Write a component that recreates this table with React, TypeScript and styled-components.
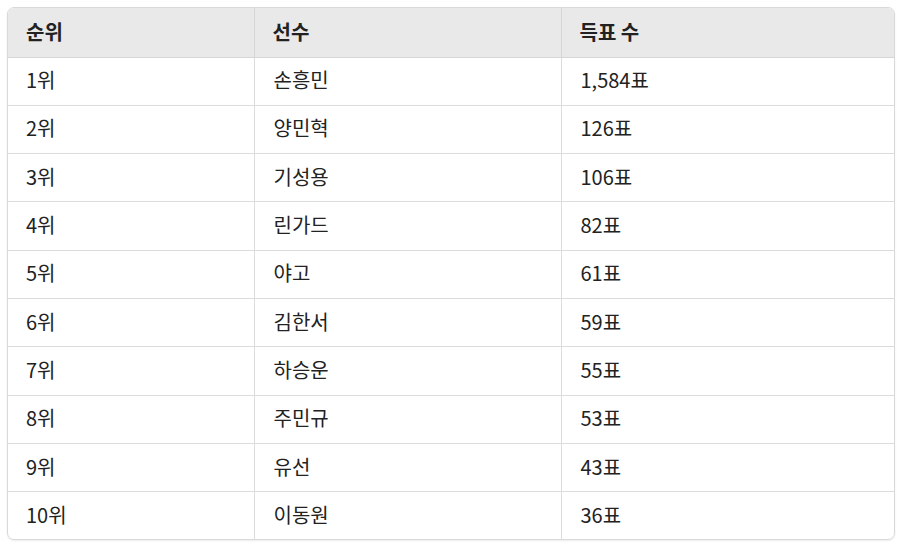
import styled, { createGlobalStyle } from "styled-components";

const GlobalStyle = createGlobalStyle`
  body {
    margin: 0;
    background: #ffffff;
    font-family: "Noto Sans CJK KR", "Noto Sans", "Liberation Sans", sans-serif;
  }
`;

const Page = styled.div`
  padding: 7px 5px 5px 7px;
`;

const TableFrame = styled.div`
  border: 1px solid #d9d9d9;
  border-radius: 7px;
  overflow: hidden;
  box-shadow: 0 1px 2px rgba(0, 0, 0, 0.08);
`;

const Table = styled.table`
  width: 100%;
  border-collapse: collapse;
  table-layout: fixed;
  font-size: 20px;
  line-height: 1.2;
  color: #222;
`;

const HeadCell = styled.th<{ $width?: number }>`
  box-sizing: border-box;
  width: ${(p) => (p.$width ? `${p.$width}px` : "auto")};
  height: 49px;
  padding: 0 0 1px 18px;
  text-align: left;
  font-weight: 700;
  background: #e9e9e9;
  border-left: 1px solid #d6d6d6;
  border-bottom: 1px solid #d6d6d6;
  &:first-child {
    border-left: none;
  }
`;

const Cell = styled.td`
  height: 45.3px;
  padding: 0 0 2px 19px;
  border-left: 1px solid #dcdcdc;
  border-top: 1px solid #dcdcdc;
  &:first-child {
    padding-left: 18px;
    border-left: none;
  }
`;

const Row = styled.tr`
  &:first-child td {
    border-top: none;
  }
`;

const rows = [
  ["1위", "손흥민", "1,584표"],
  ["2위", "양민혁", "126표"],
  ["3위", "기성용", "106표"],
  ["4위", "린가드", "82표"],
  ["5위", "야고", "61표"],
  ["6위", "김한서", "59표"],
  ["7위", "하승운", "55표"],
  ["8위", "주민규", "53표"],
  ["9위", "유선", "43표"],
  ["10위", "이동원", "36표"],
];

export default function App() {
  return (
    <Page>
      <GlobalStyle />
      <TableFrame>
        <Table>
          <thead>
            <tr>
              <HeadCell $width={246}>순위</HeadCell>
              <HeadCell $width={307}>선수</HeadCell>
              <HeadCell>득표 수</HeadCell>
            </tr>
          </thead>
          <tbody>
            {rows.map((r) => (
              <Row key={r[0]}>
                <Cell>{r[0]}</Cell>
                <Cell>{r[1]}</Cell>
                <Cell>{r[2]}</Cell>
              </Row>
            ))}
          </tbody>
        </Table>
      </TableFrame>
    </Page>
  );
}
